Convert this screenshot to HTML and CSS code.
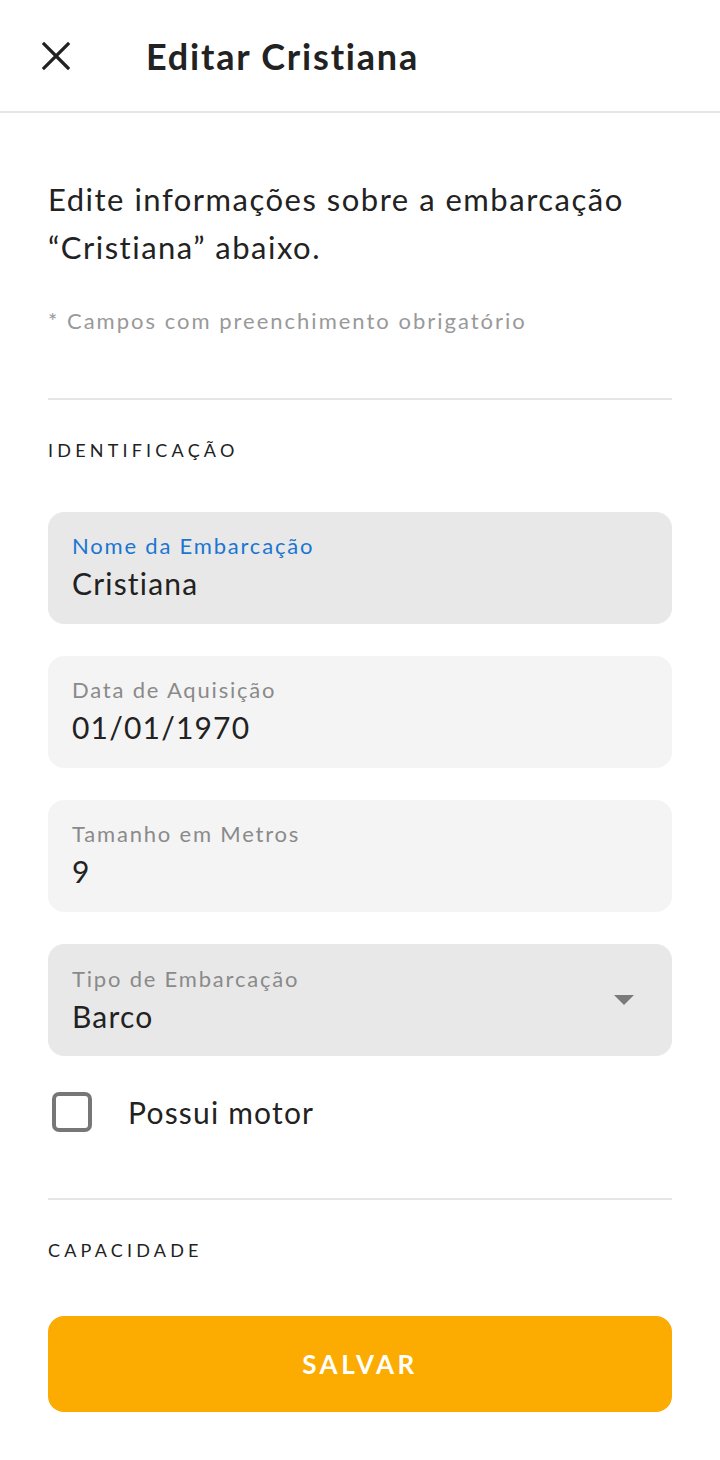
FILE: index.html
```html
<!DOCTYPE html>
<html lang="pt">
<head>
<meta charset="utf-8">
<title>Editar Cristiana</title>
<link rel="stylesheet" href="styles.css">
</head>
<body>
<header class="topbar">
  <button class="close" aria-label="Fechar">
    <svg width="28" height="28" viewBox="0 0 28 28"><path d="M2 2L26 26M26 2L2 26" stroke="#222" stroke-width="3.2" stroke-linecap="square"/></svg>
  </button>
  <h1 class="title">Editar Cristiana</h1>
</header>
<main class="content">
  <p class="intro">Edite informações sobre a embarcação “Cristiana” abaixo.</p>
  <p class="required">* Campos com preenchimento obrigatório</p>
  <hr class="divider">
  <h2 class="section">IDENTIFICAÇÃO</h2>
  <div class="fields">
    <div class="field active">
      <span class="label blue">Nome da Embarcação</span>
      <span class="value">Cristiana</span>
    </div>
    <div class="field light">
      <span class="label">Data de Aquisição</span>
      <span class="value">01/01/1970</span>
    </div>
    <div class="field light">
      <span class="label">Tamanho em Metros</span>
      <span class="value">9</span>
    </div>
    <div class="field active select">
      <div class="select-text">
        <span class="label">Tipo de Embarcação</span>
        <span class="value">Barco</span>
      </div>
      <span class="caret"></span>
    </div>
  </div>
  <label class="check">
    <span class="box"></span>
    <span class="check-label">Possui motor</span>
  </label>
  <hr class="divider second">
  <h2 class="section">CAPACIDADE</h2>
  <button class="save">SALVAR</button>
</main>
</body>
</html>
```
FILE: styles.css
```css
* { box-sizing: border-box; }
body {
  margin: 0;
  font-family: Lato, "Noto Sans", sans-serif;
  color: #222;
  background: #fff;
}
.topbar {
  display: flex;
  align-items: center;
  height: 113px;
  border-bottom: 2px solid #e6e6e6;
  padding-left: 42px;
}
.close {
  border: 0;
  background: none;
  padding: 0;
  width: 28px;
  height: 28px;
  display: flex;
}
.title {
  margin: 0 0 0 76px;
  font-size: 36px;
  font-weight: 700;
  letter-spacing: 1.8px;
  color: #222;
}
.content {
  padding: 0 48px;
}
.intro {
  margin: 62px 0 0;
  font-size: 31px;
  line-height: 48px;
  letter-spacing: 1.5px;
  color: #222;
}
.required {
  margin: 36px 0 0;
  font-size: 22px;
  color: #999;
  letter-spacing: 2px;
}
.divider {
  border: 0;
  border-top: 2px solid #e6e6e6;
  margin: 64px 0 0;
}
.section {
  margin: 39px 0 0;
  font-size: 18px;
  font-weight: 400;
  letter-spacing: 4.2px;
  color: #222;
}
.fields {
  margin-top: 51px;
  display: flex;
  flex-direction: column;
  gap: 32px;
}
.field {
  height: 112px;
  border-radius: 16px;
  padding: 20px 24px;
  display: flex;
  flex-direction: column;
}
.field.active { background: #e8e8e8; }
.field.light { background: #f4f4f4; }
.label {
  font-size: 22px;
  line-height: 28px;
  color: #8a8a8a;
  letter-spacing: 1.8px;
}
.label.blue { color: #1a76d2; }
.value {
  margin-top: 3px;
  font-size: 30px;
  line-height: 40px;
  letter-spacing: 1.2px;
  color: #222;
}
.field.select {
  flex-direction: row;
  align-items: center;
  justify-content: space-between;
}
.select-text {
  display: flex;
  flex-direction: column;
}
.caret {
  width: 0;
  height: 0;
  border-left: 10px solid transparent;
  border-right: 10px solid transparent;
  border-top: 10px solid #7a7a7a;
  margin-right: 14px;
}
.check {
  display: flex;
  align-items: center;
  margin-top: 36px;
  padding-left: 4px;
}
.box {
  width: 40px;
  height: 40px;
  border: 4px solid #777;
  border-radius: 7px;
}
.check-label {
  margin-left: 36px;
  font-size: 30px;
  letter-spacing: 1.2px;
  color: #222;
}
.divider.second { margin-top: 66px; }
.save {
  margin-top: 55px;
  width: 100%;
  height: 96px;
  border: 0;
  border-radius: 16px;
  background: #fcab00;
  color: #fff;
  font-family: Lato, "Noto Sans", sans-serif;
  font-size: 26px;
  font-weight: 700;
  letter-spacing: 3.5px;
}
```
